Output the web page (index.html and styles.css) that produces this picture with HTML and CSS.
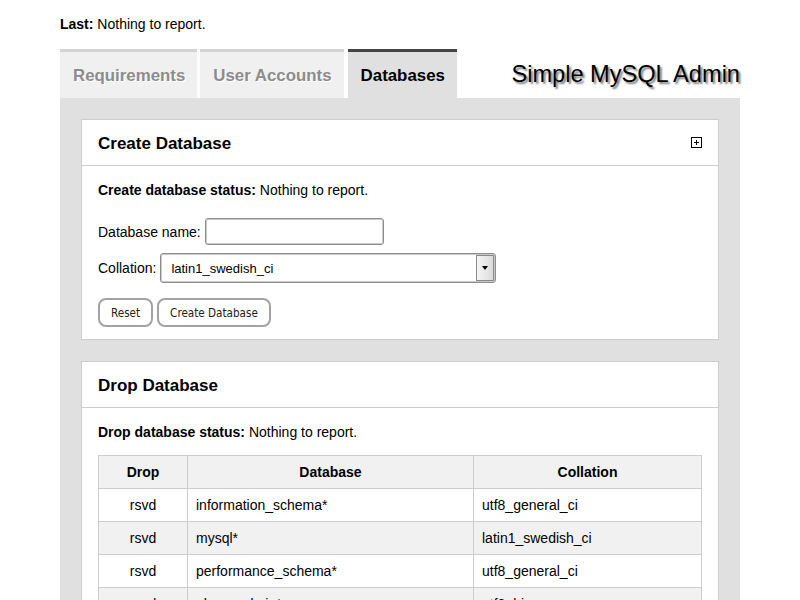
FILE: index.html
```html
<!DOCTYPE html>
<html>
<head>
<meta charset="utf-8">
<title>Simple MySQL Admin</title>
<link rel="stylesheet" href="styles.css">
</head>
<body>
<div class="page">
  <p class="last"><b>Last:</b> Nothing to report.</p>
  <div class="header">
    <nav class="tabs">
      <a class="tab">Requirements</a>
      <a class="tab">User Accounts</a>
      <a class="tab active">Databases</a>
    </nav>
    <h1 class="title">Simple MySQL Admin</h1>
  </div>
  <div class="content">
    <section class="panel">
      <div class="panel-head">
        <h2 class="panel-title">Create Database</h2>
        <span class="toggle"></span>
      </div>
      <div class="panel-body">
        <p class="status"><b>Create database status:</b> Nothing to report.</p>
        <div class="row">
          <label class="label">Database name:</label>
          <input class="text-input" type="text">
        </div>
        <div class="row">
          <label class="label">Collation:</label>
          <div class="select-wrap">
            <select class="select"><option>latin1_swedish_ci</option></select>
            <span class="select-btn"><span class="arrow"></span></span>
          </div>
        </div>
        <div class="buttons">
          <button class="btn">Reset</button>
          <button class="btn">Create Database</button>
        </div>
      </div>
    </section>
    <section class="panel">
      <div class="panel-head">
        <h2 class="panel-title">Drop Database</h2>
      </div>
      <div class="panel-body">
        <p class="status status-drop"><b>Drop database status:</b> Nothing to report.</p>
        <table class="db-table">
          <thead>
            <tr><th class="c-drop">Drop</th><th class="c-db">Database</th><th class="c-coll">Collation</th></tr>
          </thead>
          <tbody>
            <tr><td class="center">rsvd</td><td>information_schema*</td><td>utf8_general_ci</td></tr>
            <tr><td class="center">rsvd</td><td>mysql*</td><td>latin1_swedish_ci</td></tr>
            <tr><td class="center">rsvd</td><td>performance_schema*</td><td>utf8_general_ci</td></tr>
            <tr><td class="center">rsvd</td><td>phpmyadmin*</td><td>utf8_bin</td></tr>
            <tr><td class="center">rsvd</td><td>test*</td><td>latin1_swedish_ci</td></tr>
          </tbody>
        </table>
      </div>
    </section>
  </div>
</div>
</body>
</html>
```
FILE: styles.css
```css
body {
  margin: 0;
  font-family: "Liberation Sans", Arial, sans-serif;
  font-size: 14px;
  color: #000;
  background: #fff;
}
.page {
  width: 680px;
  margin: 0 auto;
}
.last {
  margin: 16px 0 17px;
  line-height: 16px;
}
.header {
  display: flex;
  align-items: flex-end;
}
.tabs {
  display: flex;
}
.tab {
  display: block;
  margin-right: 3px;
  padding: 14px 12px 12px 13px;
  border-top: 3px solid #d3d3d3;
  background: #f0f0f0;
  color: #8c8c8c;
  font-weight: bold;
  font-size: 16.85px;
  line-height: 20px;
  text-shadow: 1px 1px 0 #fff;
}
.tab.active {
  margin-left: 1px;
  border-top-color: #444;
  background: #e0e0e0;
  color: #000;
  text-shadow: none;
}
.title {
  margin: 0 0 10px auto;
  font-size: 23.6px;
  font-weight: normal;
  line-height: 27px;
  color: #000;
  text-shadow: 2px 2px 2px #777;
}
.content {
  background: #e0e0e0;
  padding: 21px 21px 40px;
}
.panel {
  background: #fff;
  border: 1px solid #cdcdcd;
  margin-bottom: 21px;
}
.panel-head {
  display: flex;
  align-items: center;
  justify-content: space-between;
  padding: 14px 16px 11px;
  border-bottom: 1px solid #cdcdcd;
}
.panel-title {
  margin: 0;
  font-size: 17px;
  line-height: 20px;
  font-weight: bold;
}
.toggle {
  position: relative;
  width: 9px;
  height: 9px;
  border: 1px solid #000;
  margin-top: -3px;
}
.toggle::before,
.toggle::after {
  content: "";
  position: absolute;
  background: #000;
}
.toggle::before {
  left: 2px;
  top: 4px;
  width: 5px;
  height: 1px;
}
.toggle::after {
  left: 4px;
  top: 2px;
  width: 1px;
  height: 5px;
}
.panel-body {
  padding: 16px 16px 12px;
}
.status {
  margin: 0 0 20px;
  line-height: 16px;
}
.status-drop {
  margin-bottom: 15px;
}
.row {
  display: flex;
  align-items: center;
  gap: 4px;
  margin-bottom: 8px;
}
.label {
  line-height: 16px;
}
.text-input {
  box-sizing: border-box;
  width: 179px;
  height: 27px;
  margin: 0;
  border: 1px solid #8f8f8f;
  box-shadow: inset 0 0 0 1px #c9c9c9;
  border-radius: 3px;
  background: #fff;
  font: 13px "Liberation Sans", Arial, sans-serif;
  padding: 2px 6px;
}
.select-wrap {
  position: relative;
  width: 336px;
  height: 30px;
}
.select {
  -webkit-appearance: none;
  appearance: none;
  box-sizing: border-box;
  width: 100%;
  height: 30px;
  margin: 0;
  border: 1px solid #8f8f8f;
  box-shadow: inset 0 0 0 1px #c9c9c9;
  border-radius: 3px;
  background: #fff;
  padding: 0 24px 0 10px;
  font: 13px "Liberation Sans", Arial, sans-serif;
  color: #000;
}
.select-btn {
  position: absolute;
  right: 2px;
  top: 2px;
  width: 16px;
  height: 24px;
  border: 1px solid #8a8a8a;
  background: linear-gradient(to right, #f4f4f4, #dcdcdc);
  display: flex;
  align-items: center;
  justify-content: center;
}
.arrow {
  width: 0;
  height: 0;
  border-left: 3px solid transparent;
  border-right: 3px solid transparent;
  border-top: 4px solid #000;
}
.buttons {
  display: flex;
  gap: 4px;
  margin-top: 15px;
}
.btn {
  box-sizing: border-box;
  height: 29px;
  padding: 0 11px;
  border: 2px solid #a3a3a3;
  border-radius: 8px;
  background: #fff;
  font-family: "DejaVu Sans Condensed", "DejaVu Sans", Verdana, sans-serif;
  font-size: 11.6px;
  color: #222;
}
.db-table {
  width: 100%;
  border-collapse: collapse;
}
.db-table th,
.db-table td {
  border: 1px solid #cdcdcd;
  padding: 8px;
  line-height: 16px;
  text-align: left;
}
.db-table th {
  background: #f1f1f1;
  text-align: center;
  font-weight: bold;
}
.c-drop { width: 72px; }
.c-db { width: 269px; }
.db-table td.center {
  text-align: center;
}
.db-table tbody tr:nth-child(even) td {
  background: #f1f1f1;
}
```
